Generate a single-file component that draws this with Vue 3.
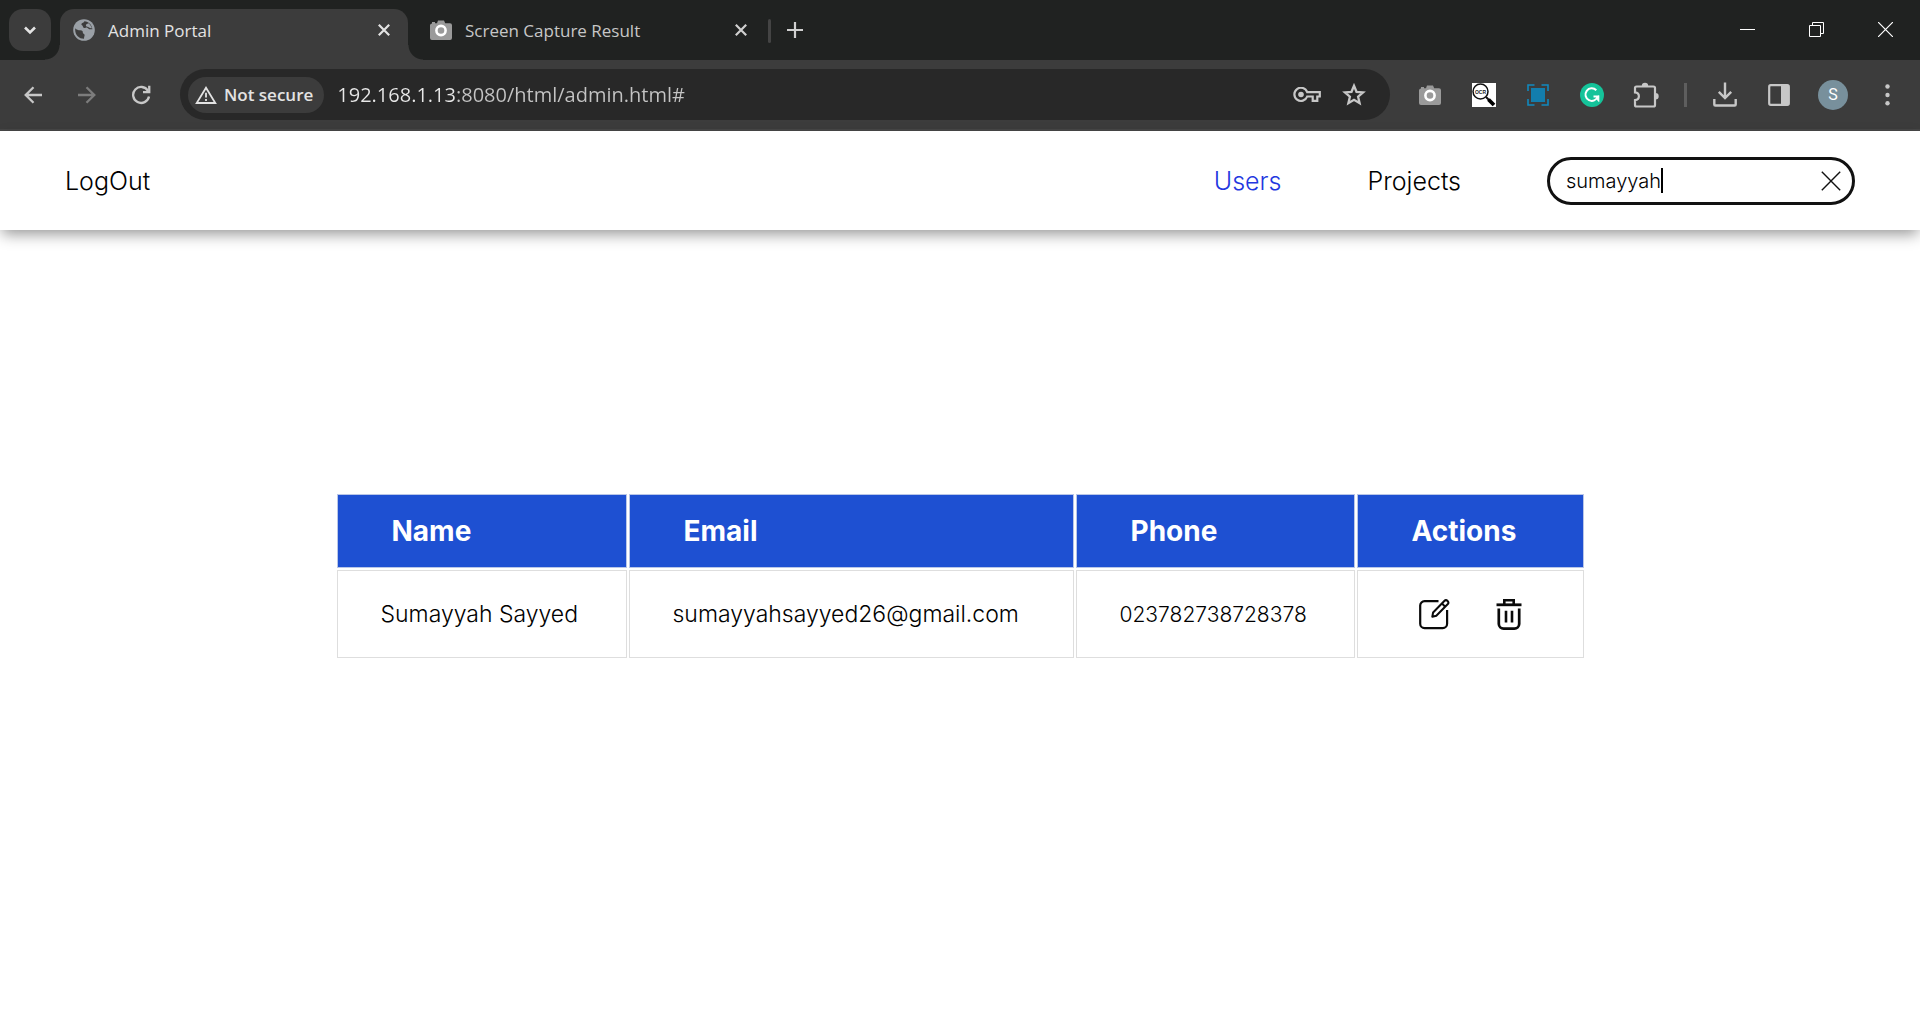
<script setup>
import { ref } from 'vue'

const url = ref('192.168.1.13:8080/html/admin.html#')
const query = ref('sumayyah')
const users = ref([
  { name: 'Sumayyah Sayyed', email: 'sumayyahsayyed26@gmail.com', phone: '023782738728378' }
])
</script>

<template>
  <div class="window">
    <div class="tabstrip">
      <button class="tab-search" aria-label="Search tabs">
        <svg width="14" height="14" viewBox="0 0 14 14"><path d="M2 4.5l5 5 5-5" fill="none" stroke="#e3e3e3" stroke-width="2.6" /></svg>
      </button>
      <div class="tab active">
        <svg width="22" height="22" viewBox="0 0 22 22">
          <circle cx="11" cy="11" r="10.8" fill="#9aa0a6" />
          <path d="M2.2 9.2c1.200 1.600 3 2 5 2 2.400 0 2.600 1 2.600 2.200 0 1.400 1.600 1 1.800 2.400.1 1.200-.6 2.400-.6 4C6 19.800 2.200 16 2.200 11z" fill="#3c3c3c" />
          <path d="M11.400 2.200c-.4 1.600-2.600 1.200-3 2.800-.3 1.400 1.500 1.300 1.500 2.600 0 1.500 1.800 1.800 2.700 1.100 1-.7 2.200.1 2.900 1 .8 1 2.500.6 3.900.5-.5-4.400-3.700-7.700-8-8z" fill="#3c3c3c" />
          <path d="M15.600 4.200c-1.800.4-3.200 1.600-2.600 2.800.5 1 2 .6 3 1.600.8.8 2.200.8 3 .6a8.800 8.800 0 0 0-3.400-5z" fill="#9aa0a6" />
        </svg>
        <span class="tab-title">Admin Portal</span>
        <button class="close" aria-label="Close tab"><svg width="12" height="12" viewBox="0 0 12 12"><path d="M.8.8l10.400 10.400M11.200.8L.8 11.200" stroke="#e3e3e3" stroke-width="2.200" /></svg></button>
      </div>
      <div class="tab">
        <svg width="22" height="20" viewBox="0 0 22 20">
          <path d="M2 3.500V2h3v1.200h2L8 .5h6l1.200 2.700H20a2 2 0 0 1 2 2V18a2 2 0 0 1-2 2H2a2 2 0 0 1-2-2V5.200a2 2 0 0 1 2-1.700z" fill="#9a9a9a" />
          <circle cx="11" cy="10.500" r="4.600" fill="#9a9a9a" stroke="#fff" stroke-width="2.600" />
        </svg>
        <span class="tab-title">Screen Capture Result</span>
        <button class="close" aria-label="Close tab"><svg width="12" height="12" viewBox="0 0 12 12"><path d="M.8.8l10.400 10.400M11.200.8L.8 11.200" stroke="#d0d0d0" stroke-width="2.200" /></svg></button>
      </div>
      <span class="tab-divider"></span>
      <button class="new-tab" aria-label="New tab"><svg width="16" height="16" viewBox="0 0 16 16"><path d="M8 0v16M0 8h16" stroke="#d0d0d0" stroke-width="2.200" /></svg></button>
      <div class="window-controls">
        <button aria-label="Minimize"><svg width="15" height="15" viewBox="0 0 15 15"><path d="M0 7.500h15" stroke="#fff" /></svg></button>
        <button aria-label="Restore"><svg width="15" height="15" viewBox="0 0 15 15"><path d="M.5 3.500h11v11H.5zM3.500 3.500v-3h11v11h-3" fill="none" stroke="#fff" /></svg></button>
        <button aria-label="Close window"><svg width="15" height="15" viewBox="0 0 15 15"><path d="M0 0l15 15M15 0L0 15" stroke="#fff" stroke-width="1.200" /></svg></button>
      </div>
    </div>

    <div class="toolbar">
      <div class="nav-buttons">
        <button aria-label="Back"><svg width="18" height="18" viewBox="0 0 18 18"><path d="M18 9H2M9.500 1.200L1.700 9l7.800 7.800" fill="none" stroke="#c7c7c7" stroke-width="2.300" /></svg></button>
        <button aria-label="Forward"><svg width="18" height="18" viewBox="0 0 18 18"><path d="M0 9h16M8.500 1.200L16.300 9l-7.800 7.800" fill="none" stroke="#7c7c7c" stroke-width="2.300" /></svg></button>
        <button aria-label="Reload"><svg width="20" height="20" viewBox="0 0 20 20"><path d="M17 5.800A8 8 0 1 0 18 11.500" fill="none" stroke="#c7c7c7" stroke-width="2.300" /><path d="M19.400.8v7.400h-7.400V6h5.100V.8z" fill="#c7c7c7" /></svg></button>
      </div>
      <div class="omnibox">
        <button class="chip">
          <svg width="22" height="18" viewBox="0 0 22 18"><path d="M11 1.800L20.300 17H1.700z" fill="none" stroke="#e3e3e3" stroke-width="1.800" /><path d="M11 6.800v4.800M11 13v2" stroke="#e3e3e3" stroke-width="1.800" /></svg>
          Not secure
        </button>
        <input v-model="url" class="url" type="text" aria-label="Address" spellcheck="false" />
        <button class="icon-btn" aria-label="Passwords">
          <svg width="28" height="16" viewBox="0 0 28 16"><path d="M14.200 5.200h12.600v4.300h-2.500v4.300h-4.600V9.500h-5.500a6.600 6.600 0 1 1 0-4.300z" fill="none" stroke="#c7c7c7" stroke-width="2.200" /><circle cx="8" cy="7.500" r="2.800" fill="#c7c7c7" /></svg>
        </button>
        <button class="icon-btn" aria-label="Bookmark">
          <svg width="24" height="23" viewBox="0 0 24 23"><path d="M12 2.800l2.500 6 6.600.6-5 4.300 1.500 6.500L12 16.800l-5.600 3.400 1.500-6.500-5-4.300 6.600-.6z" fill="none" stroke="#c7c7c7" stroke-width="2.300" /></svg>
        </button>
      </div>
      <div class="extensions">
        <button aria-label="Screen capture">
          <svg width="22" height="20" viewBox="0 0 22 20"><path d="M2 3.500V2h3v1.200h2L8 .5h6l1.200 2.700H20a2 2 0 0 1 2 2V18a2 2 0 0 1-2 2H2a2 2 0 0 1-2-2V5.200a2 2 0 0 1 2-1.700z" fill="#9a9a9a" /><circle cx="11" cy="10.500" r="4.600" fill="#9a9a9a" stroke="#fff" stroke-width="2.600" /></svg>
        </button>
        <button aria-label="OCR">
          <svg width="24" height="24" viewBox="0 0 24 24"><path d="M0 0h24v24H0z" fill="#fff" /><circle cx="8.500" cy="8.500" r="7.500" fill="none" stroke="#111" stroke-width="1.500" /><path d="M14 14l3 3" stroke="#111" stroke-width="2" /><path d="M16.500 16.500l5.500 5.500" stroke="#000" stroke-width="3.800" /><text x="8.500" y="10.500" text-anchor="middle" font-family="Liberation Sans, sans-serif" font-size="5" font-weight="700" fill="#222">OCR</text></svg>
        </button>
        <button aria-label="Select area">
          <svg width="22" height="22" viewBox="0 0 22 22"><path d="M4 4h14v14H4z" fill="#137ead" /><path d="M1 7V1h6.500M14.500 1H21v6M21 15v6h-6.500M7.500 21H1v-6" fill="none" stroke="#1089bf" stroke-width="1.600" /></svg>
        </button>
        <button aria-label="Grammar">
          <svg width="24" height="24" viewBox="0 0 24 24"><circle cx="12" cy="12" r="12" fill="#15c39a" /><path d="M16.300 7.200a6.300 6.300 0 1 0 1.500 6.300H13.500" fill="none" stroke="#fff" stroke-width="2" /><path d="M18.800 12.500v6l-2-2.500" fill="#fff" stroke="#fff" /></svg>
        </button>
        <button aria-label="Extensions">
          <svg width="26" height="26" viewBox="0 0 26 26"><path d="M3.500 4.500h17a1.500 1.500 0 0 1 1.500 1.500v17a1.500 1.500 0 0 1-1.500 1.500h-17a1.500 1.500 0 0 1-1.500-1.500v-4.800c5.200-.6 5.200-7.200 0-7.800V6a1.500 1.500 0 0 1 1.500-1.500z" fill="none" stroke="#c7c7c7" stroke-width="2.200" /><path d="M8.800 4a3.200 3.200 0 0 1 6.400 0zM22.500 11a3.200 3.200 0 0 1 0 6.400z" fill="#c7c7c7" /></svg>
        </button>
        <span class="divider"></span>
        <button aria-label="Downloads">
          <svg width="24" height="25" viewBox="0 0 24 25"><path d="M12 .5v15M5.800 9.800l6.200 6.200 6.200-6.200M1.300 17v5.500q0 1 1 1h19.400q1 0 1-1V17" fill="none" stroke="#c7c7c7" stroke-width="2.400" /></svg>
        </button>
        <button aria-label="Side panel">
          <svg width="22" height="22" viewBox="0 0 22 22"><rect x="1.200" y="1.200" width="19.600" height="19.600" rx="1.500" fill="none" stroke="#c7c7c7" stroke-width="2.200" /><path d="M13 1h8v20h-8z" fill="#c7c7c7" /></svg>
        </button>
        <button aria-label="Profile"><span class="avatar">S</span></button>
        <button aria-label="Menu">
          <svg width="5" height="22" viewBox="0 0 5 22"><g fill="#c7c7c7"><circle cx="2.500" cy="2.500" r="2.200" /><circle cx="2.500" cy="11" r="2.200" /><circle cx="2.500" cy="19.300" r="2.200" /></g></svg>
        </button>
      </div>
    </div>

    <header class="site-header">
      <a href="#" class="logout">LogOut</a>
      <nav>
        <a href="#" class="current">Users</a>
        <a href="#">Projects</a>
      </nav>
      <div class="search">
        <input v-model="query" type="text" aria-label="Search users" spellcheck="false" />
        <span class="caret"></span>
        <button aria-label="Clear search" @click="query = ''">
          <svg width="20" height="20" viewBox="0 0 20 20"><path d="M.8.8l18.400 18.400M19.200.8L.8 19.200" stroke="#111" stroke-width="1.400" /></svg>
        </button>
      </div>
    </header>

    <main>
      <table>
        <colgroup>
          <col class="c-name" /><col class="c-email" /><col class="c-phone" /><col class="c-actions" />
        </colgroup>
        <thead>
          <tr><th>Name</th><th>Email</th><th>Phone</th><th>Actions</th></tr>
        </thead>
        <tbody>
          <tr v-for="user in users" :key="user.email">
            <td>{{ user.name }}</td>
            <td>{{ user.email }}</td>
            <td class="phone">{{ user.phone }}</td>
            <td>
              <div class="actions">
                <button aria-label="Edit user">
                  <svg width="32" height="32" viewBox="0 0 32 32" fill="none" stroke="#0a0a0a"><path d="M20.500 3.200H6.500A4.300 4.300 0 0 0 2.200 7.500v18.300a4.300 4.300 0 0 0 4.300 4.300h18.300a4.300 4.300 0 0 0 4.300-4.300V12" stroke-width="2.200" /><path d="M14.300 18.800l.8-4.300L26.300 3a2.300 2.300 0 0 1 3.300 3.300L18.300 17.700zM24 5.500l3.200 3.200" stroke-width="2" stroke-linejoin="round" /></svg>
                </button>
                <button aria-label="Delete user">
                  <svg width="26" height="32" viewBox="0 0 26 32" fill="none" stroke="#0a0a0a"><path d="M.5 6.800h25" stroke-width="2.800" /><path d="M8.300 6.300V2.200h9.400v4.100" stroke-width="2.600" /><path d="M2.800 10.500V26a4.800 4.800 0 0 0 4.800 4.600h10.800a4.800 4.800 0 0 0 4.800-4.600V10.500" stroke-width="2.700" /><path d="M10 12.800v11.800M16 12.800v11.800" stroke-width="2.600" /></svg>
                </button>
              </div>
            </td>
          </tr>
        </tbody>
      </table>
    </main>
  </div>
</template>

<style>
body {
  margin: 0;
  background: #fff;
}
</style>

<style scoped>
* {
  box-sizing: border-box;
}
.window {
  min-height: 100vh;
  font-family: Inter, "Noto Sans", sans-serif;
  color: #000;
}
button {
  display: flex;
  align-items: center;
  justify-content: center;
  padding: 0;
  border: 0;
  background: none;
  font: inherit;
  color: inherit;
  cursor: pointer;
}
input {
  padding: 0;
  border: 0;
  outline: 0;
  background: none;
  font: inherit;
}
svg {
  display: block;
  flex: none;
}
a {
  color: inherit;
  text-decoration: none;
}

.tabstrip {
  display: flex;
  height: 60px;
  padding-left: 9px;
  background: #202221;
  font-family: "Open Sans", "Noto Sans", sans-serif;
}
.tab-search {
  width: 42px;
  height: 42px;
  margin: 9px 9px 0 0;
  border-radius: 14px;
  background: #3c3c3c;
}
.tab {
  display: flex;
  align-items: center;
  gap: 13px;
  width: 348px;
  height: 51px;
  margin-top: 9px;
  padding: 0 18px 9px 13px;
  color: #c7c7c7;
}
.tab + .tab {
  padding-right: 9px;
  padding-left: 22px;
}
.tab.active {
  position: relative;
  border-radius: 14px 14px 0 0;
  background: #3c3c3c;
  color: #e3e3e3;
}
.tab.active::before,
.tab.active::after {
  content: "";
  position: absolute;
  bottom: 0;
  width: 15px;
  height: 15px;
}
.tab.active::before {
  right: 100%;
  background: radial-gradient(circle at 0 0, transparent 14px, #3c3c3c 15px);
}
.tab.active::after {
  left: 100%;
  background: radial-gradient(circle at 100% 0, transparent 14px, #3c3c3c 15px);
}
.tab-title {
  flex: 1;
  padding-top: 2px;
  font-size: 17px;
  line-height: 24px;
  white-space: nowrap;
}
.tab-divider {
  width: 3px;
  height: 24px;
  margin: 19px 16px 0 12px;
  border-radius: 2px;
  background: #444;
}
.new-tab {
  height: 60px;
}
.window-controls {
  display: flex;
  margin-left: auto;
}
.window-controls button {
  width: 69px;
  height: 58px;
}

.toolbar {
  display: flex;
  align-items: center;
  height: 71px;
  padding: 0 6px 0 20px;
  border-bottom: 2px solid #474747;
  background: #3c3c3c;
  font-family: "Open Sans", "Noto Sans", sans-serif;
}
.nav-buttons {
  display: flex;
  gap: 28px;
  margin-right: 26px;
}
.nav-buttons button {
  width: 26px;
  height: 26px;
}
.omnibox {
  display: flex;
  flex: 1;
  align-items: center;
  gap: 21px;
  height: 51px;
  padding: 0 24px 0 8px;
  border-radius: 26px;
  background: #282828;
}
.chip {
  gap: 7px;
  height: 36px;
  margin-right: -8px;
  padding: 0 11px 0 7px;
  border-radius: 18px;
  background: #3c3c3c;
  color: #e3e3e3;
  font-size: 17px;
  font-weight: 600;
  white-space: nowrap;
}
.url {
  flex: 1;
  min-width: 0;
  height: 36px;
  background: linear-gradient(90deg, #e8e8e8 118px, #c4c4c4 118px);
  background-clip: text;
  color: transparent;
  font-size: 20px;
}
.extensions {
  display: flex;
  align-items: center;
  margin-left: 13px;
}
.extensions button {
  width: 54px;
  height: 36px;
}
.divider {
  width: 3px;
  height: 24px;
  margin: 0 11px;
  background: #5e5e5e;
}
.avatar {
  width: 30px;
  border-radius: 50%;
  background: #78909c;
  color: #fff;
  font-family: Roboto, sans-serif;
  font-size: 16px;
  line-height: 30px;
}

.site-header {
  display: flex;
  align-items: center;
  height: 99px;
  padding: 0 65px;
  background: #fff;
  box-shadow: 0 6px 14px -2px rgba(0, 0, 0, 0.42);
  font-size: 25px;
  font-weight: 300;
}
nav {
  display: flex;
  gap: 86px;
  margin: 0 86px 0 auto;
}
.current {
  color: #2337e0;
}
.search {
  display: flex;
  align-items: center;
  width: 308px;
  height: 48px;
  padding: 0 11px 0 16px;
  border: 3px solid #111;
  border-radius: 24px;
}
.search input {
  field-sizing: content;
  max-width: 240px;
  font-size: 20px;
}
.caret {
  width: 2px;
  height: 25px;
  background: #000;
}
.search button {
  margin-left: auto;
}

main {
  padding-top: 262px;
}
table {
  width: calc(65% + 2px);
  margin: 0 auto;
  border-spacing: 2px;
  table-layout: fixed;
}
.c-name { width: 290px; }
.c-email { width: 445px; }
.c-phone { width: 279px; }
.c-actions { width: 227px; }
th,
td {
  border: 1px solid #dedede;
  text-align: left;
  white-space: nowrap;
}
th {
  height: 74px;
  padding: 0 54px;
  border-color: #b9c6e8;
  background: #1e50d2;
  color: #fff;
  font-size: 28px;
  font-weight: 700;
}
td {
  height: 88px;
  padding: 0 43px;
  font-size: 23px;
  font-weight: 300;
}
td.phone {
  font-size: 21px;
}
.actions {
  display: flex;
  align-items: center;
  justify-content: center;
  gap: 46px;
}
</style>
